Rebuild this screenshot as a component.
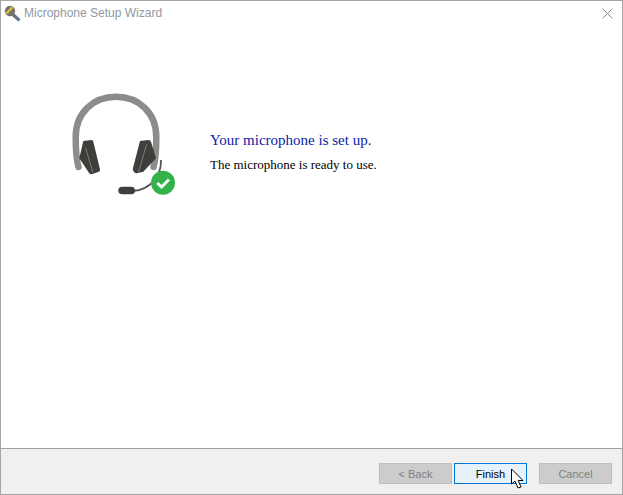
<div class="window">
  <header class="titlebar">
    <svg class="app-icon" width="18" height="18" viewBox="0 0 18 18">
      <path d="M8 9 L15.500 15.500" stroke="#66788c" stroke-width="3.400" stroke-linecap="round" />
      <circle cx="7" cy="7" r="5.200" fill="#77756e" />
      <path d="M3.200 9.500 L9.500 3.200" stroke="#e4bd45" stroke-width="2.200" />
    </svg>
    <span class="title">Microphone Setup Wizard</span>
    <svg class="close" width="11" height="11" viewBox="0 0 11 11">
      <path d="M.5.5l10 10M10.5.5l-10 10" stroke="#8a8a8a" stroke-width="1" fill="none" />
    </svg>
  </header>

  <main class="content">
    <svg class="illustration" width="140" height="125" viewBox="50 80 140 125">
      <path d="M78.500 167 C76.500 160 75.700 150 75.700 137 C75.700 113 93 96.700 116 96.700 C139 96.700 156.300 113 156.300 137 C156.300 150 155.500 160 153.500 167" fill="none" stroke="#8c8c8c" stroke-width="6.500" stroke-linecap="round" />
      <path d="M83.300 141 L91.700 140 Q93 140 93.300 141.700 L100 169.300 Q100 171.500 99 171.800 L91.700 174.300 Q90 174.300 89.300 173.300 L79.300 158.300 Z" fill="#3f3e3b" />
      <path d="M140 141 L148.300 140 Q150.500 140 151 141.700 L156 158.300 L143.300 171.700 L136.700 173.300 Q134 173.500 132.700 169.300 Z" fill="#3f3e3b" />
      <path d="M85.700 148 L93 173" stroke="#7d7b75" stroke-width="1" />
      <path d="M146.700 144 L138.500 172" stroke="#7d7b75" stroke-width="1" />
      <path d="M161 160 C161.500 176 150 190 133 191" fill="none" stroke="#55544f" stroke-width="1.800" />
      <rect x="118.300" y="186.700" width="16.700" height="7.600" rx="3.800" fill="#3f3e3b" />
      <circle cx="163" cy="182.700" r="12" fill="#33b14a" />
      <path d="M157.300 183 L161.500 187 L169 179.500" fill="none" stroke="#fff" stroke-width="2.800" />
    </svg>

    <div class="message">
      <h1>Your microphone is set up.</h1>
      <p>The microphone is ready to use.</p>
    </div>
  </main>

  <footer class="footer">
    <button class="btn" disabled>&lt; Back</button>
    <button class="btn primary">Finish</button>
    <button class="btn cancel" disabled>Cancel</button>
  </footer>

  <svg class="cursor" width="17" height="22" viewBox="0 0 17 22">
    <path d="M1.500 1 L1.500 16 L5 13 L8 20 L11 19 L8.200 12.500 L13 12.500 Z" fill="#fff" stroke="#000" stroke-width="1" />
  </svg>
</div>

<style>
  :global(body) {
    margin: 0;
    background: #fff;
  }

  .window {
    position: relative;
    box-sizing: border-box;
    width: 623px;
    height: 495px;
    display: flex;
    flex-direction: column;
    border: 1px solid #a6a6a6;
    background: #fff;
    overflow: hidden;
  }

  .titlebar {
    height: 29px;
    flex: none;
    display: flex;
    align-items: center;
    padding: 0 9px 5px 2px;
    box-sizing: border-box;
  }

  .app-icon {
    flex: none;
  }

  .title {
    margin-left: 3px;
    font: 12px "Liberation Sans", Arial, sans-serif;
    color: #8f98a3;
  }

  .close {
    margin-left: auto;
  }

  .content {
    flex: 1;
    display: flex;
    align-items: flex-start;
    padding-top: 50px;
    padding-left: 49px;
  }

  .illustration {
    flex: none;
    display: block;
  }

  .message {
    margin-left: 20px;
    padding-top: 51px;
    font-family: "Liberation Serif", "Times New Roman", serif;
  }

  h1 {
    margin: 0;
    font-size: 15px;
    line-height: 18px;
    font-weight: 400;
    color: #0a22a6;
  }

  p {
    margin: 8px 0 0;
    font-size: 13px;
    line-height: 15px;
    color: #000;
  }

  .footer {
    flex: none;
    height: 46px;
    box-sizing: border-box;
    display: flex;
    align-items: center;
    justify-content: flex-end;
    gap: 2px;
    padding: 4px 10px 0 0;
    background: #f0f0f0;
    border-top: 1px solid #a0a0a0;
  }

  .btn {
    width: 73px;
    height: 21px;
    box-sizing: border-box;
    padding: 0;
    border: 1px solid #bfbfbf;
    background: #cccccc;
    color: #808080;
    font: 11px "Liberation Sans", Arial, sans-serif;
  }

  .primary {
    background: #e5f1fb;
    border: 1px solid #0078d7;
    color: #000;
  }

  .cancel {
    margin-left: 10px;
  }

  .cursor {
    position: absolute;
    left: 509px;
    top: 467px;
  }
</style>
